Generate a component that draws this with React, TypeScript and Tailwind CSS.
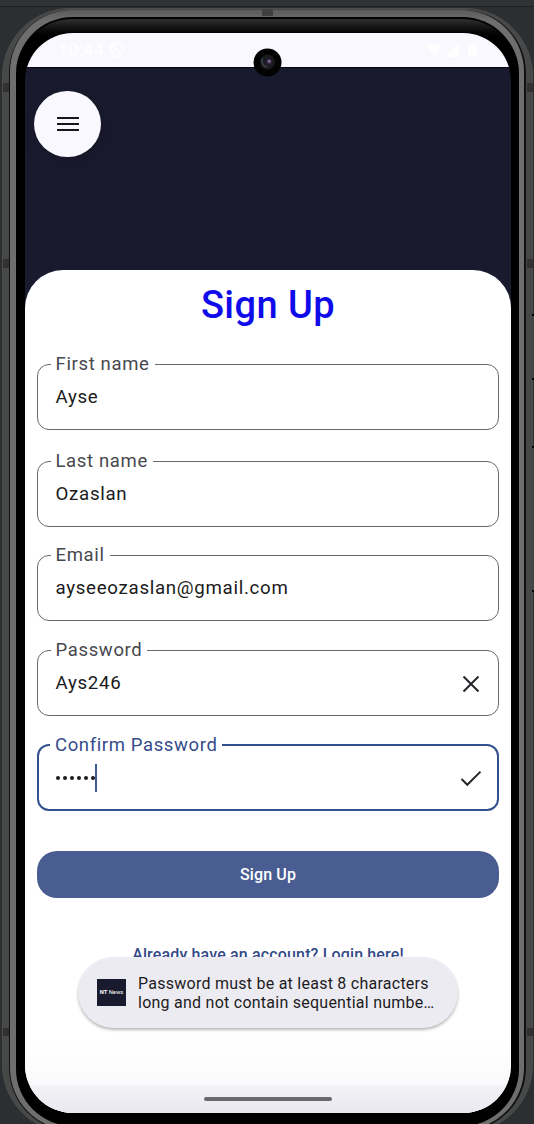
import React from "react";

type FieldProps = {
  label: string;
  gap: string;
  value: React.ReactNode;
  focused?: boolean;
  icon?: React.ReactNode;
};

function Field({ label, gap, value, focused, icon }: FieldProps) {
  return (
    <fieldset
      className={`flex min-w-0 rounded-[12px] pl-[5px] ${
        focused ? "h-[76px] border-[2.5px] border-[#33508f]" : "h-[76px] border border-[#68696e]"
      } ${gap}`}
    >
      <legend
        className={`h-5 whitespace-nowrap px-[5px] text-[18.5px] leading-5 ${
          focused ? "ml-[6px] tracking-[0.62px] text-[#354b8b]" : "ml-[7.5px] tracking-[0.65px] text-[#47484e]"
        }`}
      >
        {label}
      </legend>
      <div
        className={`flex w-full items-center justify-between text-[18.7px] tracking-[0.7px] text-[#1b1b20] ${
          focused ? "h-[46px] pl-[12px] pr-[14px]" : "h-[47px] pl-[12.5px] pr-[15px]"
        }`}
      >
        <span className="flex items-center">{value}</span>
        {icon}
      </div>
    </fieldset>
  );
}

function CloseIcon() {
  return (
    <svg width="24" height="24" viewBox="0 0 24 24" fill="none" stroke="#25262a" strokeWidth="2">
      <path d="M4.5 4.5 19.5 19.5M19.5 4.5 4.5 19.5" />
    </svg>
  );
}

function CheckIcon() {
  return (
    <svg width="24" height="24" viewBox="0 0 24 24" fill="none" stroke="#25262a" strokeWidth="2">
      <path d="M2.5 13 8.3 18.8 21.5 5.6" />
    </svg>
  );
}

function StatusBar() {
  return (
    <div className="flex h-[34px] shrink-0 items-center justify-between bg-[#f8f8fe] pl-[33px] pr-[31px] text-white/80">
      <div className="flex items-center gap-[6px] text-[18px] font-medium leading-none">
        <span>10:44</span>
        <svg width="14" height="16" viewBox="0 0 14 16" fill="none" stroke="currentColor" strokeWidth="2">
          <path d="M7 1 13 3v5c0 3-2 5-6 7-4-2-6-4-6-7V3zM2 3l10 10" />
        </svg>
      </div>
      <svg width="54" height="15" viewBox="0 0 54 15" fill="currentColor">
        <path d="M0 3Q8 -3 16 3L8 14zM33 0v14H19zM42 2h2V0h5v2h2v12h-9z" />
      </svg>
    </div>
  );
}

function Camera() {
  return (
    <svg className="absolute left-[228px] top-[15px]" width="29" height="29" viewBox="0 0 29 29">
      <circle cx="14.5" cy="14.5" r="14" fill="#030304" />
      <circle cx="14.5" cy="14" r="7.5" fill="#17191c" />
      <path d="M9.5 10.5a6 6 0 0 0 4.5 8.5" fill="none" stroke="#343c41" strokeWidth="2" />
      <circle cx="15.5" cy="14" r="4" fill="#211b2b" />
      <circle cx="16.2" cy="13.4" r="2" fill="#624d72" />
      <circle cx="16" cy="12.8" r=".7" fill="#a595b0" />
    </svg>
  );
}

function Toast() {
  return (
    <div className="absolute left-[53px] top-[924px] flex h-[71px] w-[380px] items-center rounded-full bg-[#edebf2] pl-[19px] shadow-[0_2px_3px_rgba(0,0,0,0.28)]">
      <div className="flex h-[27px] w-[29px] shrink-0 items-center justify-center whitespace-nowrap bg-[#191a2d] text-[5.8px] text-white">
        <b>NT</b>&nbsp;News
      </div>
      <p className="ml-3 whitespace-nowrap pt-px text-[16px] leading-[19px] tracking-[0.25px] text-[#1d1c22]">
        Password must be at least 8 characters
        <br />
        long and not contain sequential numbe…
      </p>
    </div>
  );
}

function Screen() {
  return (
    <main className="relative flex h-[1080px] w-[486px] flex-col overflow-hidden rounded-[48px] bg-[#1a1a2e]">
      <StatusBar />
      <div className="h-[203px] shrink-0 border-t border-black/70 pl-[9px] pt-[23px]">
        <button className="flex h-[66px] w-[67px] items-center justify-center rounded-full bg-[#f9f8fe] shadow-[4px_7px_20px_rgba(0,0,0,0.12)]">
          <svg width="22" height="16" viewBox="0 0 22 16" stroke="#17181a" strokeWidth="2">
            <path d="M0 2h22M0 8h22M0 14h22" />
          </svg>
        </button>
      </div>
      <section className="flex h-[843px] shrink-0 flex-col rounded-t-[38px] bg-white px-3">
        <h1 className="mt-[10px] text-center text-[38px] font-medium leading-[50px] tracking-[0.45px] text-[#100bea]">
          Sign Up
        </h1>
        <Field label="First name" gap="mt-[24px]" value="Ayse" />
        <Field label="Last name" gap="mt-[21px]" value="Ozaslan" />
        <Field label="Email" gap="mt-[18px]" value="ayseeozaslan@gmail.com" />
        <Field label="Password" gap="mt-[19px]" value="Ays246" icon={<CloseIcon />} />
        <Field
          label="Confirm Password"
          gap="mt-[19px]"
          focused
          icon={<CheckIcon />}
          value={
            <>
              <span className="flex gap-[3px]">
                {[0, 1, 2, 3, 4, 5].map((i) => (
                  <i key={i} className="size-[4px] rounded-full bg-[#1b1b20]" />
                ))}
              </span>
              <i className="h-[28px] w-[2px] bg-[#405792]" />
            </>
          }
        />
        <button className="mt-[40px] h-[47px] shrink-0 rounded-[20px] bg-[#495d92] text-[16px] font-medium tracking-[0.15px] text-white">
          Sign Up
        </button>
        <a className="mt-[47px] text-center text-[16px] font-medium leading-5 tracking-[0.15px] text-[#344a88]">
          Already have an account? Login here!
        </a>
        <div className="-mx-3 mt-auto flex h-[72px] flex-col justify-end bg-linear-to-b from-white to-[#f7f7f9]">
          <div className="flex h-[28px] items-center justify-center bg-linear-to-b from-[#f3f2f7] to-[#e9e8ee]">
            <div className="h-1 w-[128px] rounded-full bg-[#69686d]" />
          </div>
        </div>
      </section>
      <Toast />
      <Camera />
    </main>
  );
}

export default function App() {
  return (
    <div className="relative h-[1124px] w-[534px] overflow-hidden bg-[#2c2e32] font-[Roboto,sans-serif]">
      <div className="h-[7px] border-b border-[#1e1f22] bg-[#303236]" />
      <div className="ml-[2px] mt-px h-[1125px] w-[531px] rounded-[68px] border border-[#4c4c4c] bg-[#474848] px-[6px] pt-px">
        <div className="h-[1121px] rounded-[63px] bg-[#101010] pl-px pr-[2px]">
          <div className="h-[1120px] rounded-[62px] bg-linear-to-b from-[#5a5a5a] via-[#6e6e6e] via-[1%] to-[#6e6e6e] pl-[6px] pr-[5px] pt-[7px]">
            <div className="h-[1109px] rounded-[57px] border-t-2 border-black bg-linear-to-b from-[#303030] via-black via-[2%] to-black pl-[9px] pr-[8px] pt-[14px]">
              <Screen />
            </div>
          </div>
        </div>
      </div>
      <i className="absolute left-[262px] top-[9px] h-[7px] w-[11px] bg-[#404040]" />
      <i className="absolute left-[3px] top-[259px] h-[9px] w-[6px] bg-[#323232]" />
      <i className="absolute left-[527px] top-[259px] h-[9px] w-[6px] bg-[#323232]" />
      <i className="absolute left-[3px] top-[1028px] h-[8px] w-[6px] bg-[#303030]" />
      <i className="absolute left-[527px] top-[1028px] h-[8px] w-[6px] bg-[#303030]" />
      <i className="absolute left-[532px] top-[314px] h-[66px] w-[2px] border-y-2 border-black bg-[#444]" />
      <i className="absolute left-[532px] top-[446px] h-[146px] w-[2px] border-y-2 border-black bg-[#444]" />
      <i className="absolute left-[527px] top-[83px] h-[9px] w-[6px] bg-[#323232]" />
      <i className="absolute left-[3px] top-[83px] h-[9px] w-[6px] bg-[#323232]" />
    </div>
  );
}
